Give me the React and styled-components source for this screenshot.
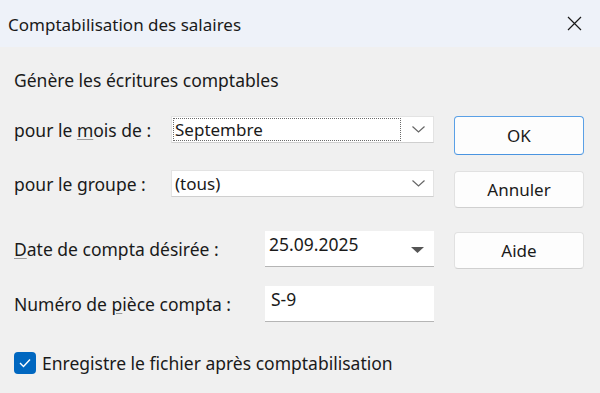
import React from 'react';
import styled, { createGlobalStyle } from 'styled-components';

const GlobalStyle = createGlobalStyle`
  html, body {
    margin: 0;
    padding: 0;
    background: #f0f0f0;
  }
  body {
    font-family: 'Noto Sans', 'Open Sans', sans-serif;
    color: #1a1a1a;
  }
`;

const Window = styled.div`
  width: 600px;
  height: 393px;
  background: #f0f0f0;
  overflow: hidden;
`;

const TitleBar = styled.div`
  height: 47px;
  background: #eef2f9;
  display: flex;
  align-items: center;
  justify-content: space-between;
  padding: 0 18px 0 8px;
  box-sizing: border-box;
`;

const Title = styled.div`
  font-size: 17px;
  color: #1a1a1a;
  margin-top: 1px;
`;

const CloseButton = styled.div`
  width: 16px;
  height: 16px;
  display: flex;
  align-items: center;
  justify-content: center;
`;

const Body = styled.div`
  padding: 20px 16px 0 14px;
`;

const Heading = styled.div`
  font-size: 17.5px;
  line-height: 26px;
`;

const Content = styled.div`
  display: flex;
  gap: 20px;
  margin-top: 23px;
`;

const FormCol = styled.div`
  width: 420px;
  display: flex;
  flex-direction: column;
`;

const Row = styled.div`
  display: flex;
  align-items: center;
  margin-top: ${p => p.$top || 0}px;
`;

const Label = styled.div`
  width: ${p => p.$w}px;
  flex-shrink: 0;
  font-size: 17.5px;
  white-space: nowrap;
`;

const Key = styled.span`
  text-decoration: underline;
  text-decoration-color: #9a9a9a;
  text-underline-offset: 2px;
`;

const Combo = styled.div`
  flex: 1;
  height: 27px;
  background: #fff;
  border: 1px solid #e3e3e3;
  border-bottom-color: #cfcfcf;
  box-sizing: border-box;
  display: flex;
  align-items: center;
  padding: 1px 0 1px 1px;
  font-size: 17px;
`;

const ComboText = styled.div`
  flex: 1;
  height: 100%;
  display: flex;
  align-items: center;
  padding-left: 1px;
  box-sizing: border-box;
  border: 1px dotted ${p => (p.$focus ? '#6b6b6b' : 'transparent')};
  margin-right: 3px;
`;

const Chevron = styled.div`
  width: 28px;
  display: flex;
  justify-content: center;
  padding-right: 1px;
`;

const Field = styled.div`
  flex: 1;
  height: 36px;
  background: #fff;
  border-bottom: 1px solid #b5b5b5;
  box-sizing: border-box;
  display: flex;
  align-items: flex-start;
  justify-content: space-between;
  padding: 1px 10px 0 ${p => p.$pl || 4}px;
  font-size: 17.5px;
`;

const DropArrow = styled.div`
  align-self: center;
  margin-top: 2px;
  display: flex;
`;

const ButtonCol = styled.div`
  width: 130px;
  display: flex;
  flex-direction: column;
`;

const Button = styled.div`
  height: ${p => p.$h || 37}px;
  margin-top: ${p => p.$top || 0}px;
  background: #fdfdfd;
  border: 1px solid ${p => (p.$default ? '#5aa0e6' : '#e1e1e1')};
  border-bottom-color: ${p => (p.$default ? '#4a94e0' : '#d0d0d0')};
  border-radius: 4px;
  box-sizing: border-box;
  display: flex;
  align-items: center;
  justify-content: center;
  font-size: 17px;
  color: #1a1a1a;
`;

const CheckRow = styled.div`
  display: flex;
  align-items: center;
  gap: 6px;
  margin-top: 29px;
  font-size: 17.5px;
`;

const CheckBox = styled.div`
  width: 22px;
  height: 22px;
  border-radius: 4px;
  background: #0067c0;
  display: flex;
  align-items: center;
  justify-content: center;
`;

const ChevronIcon = () => (
  <svg width="13" height="7" viewBox="0 0 13 7">
    <path d="M0.5 0.5 L6.5 6 L12.5 0.5" fill="none" stroke="#666" strokeWidth="1.2" />
  </svg>
);

const App = () => {
  return (
    <Window>
      <GlobalStyle />
      <TitleBar>
        <Title>Comptabilisation des salaires</Title>
        <CloseButton>
          <svg width="15" height="15" viewBox="0 0 15 15">
            <path d="M1 1 L14 14 M14 1 L1 14" stroke="#1a1a1a" strokeWidth="1.2" />
          </svg>
        </CloseButton>
      </TitleBar>
      <Body>
        <Heading>Génère les écritures comptables</Heading>
        <Content>
          <FormCol>
            <Row>
              <Label $w={157}>pour le <Key>m</Key>ois de :</Label>
              <Combo>
                <ComboText $focus>Septembre</ComboText>
                <Chevron><ChevronIcon /></Chevron>
              </Combo>
            </Row>
            <Row $top={27}>
              <Label $w={157}>pour le groupe :</Label>
              <Combo>
                <ComboText>(tous)</ComboText>
                <Chevron><ChevronIcon /></Chevron>
              </Combo>
            </Row>
            <Row $top={34}>
              <Label $w={251}><Key>D</Key>ate de compta désirée :</Label>
              <Field>
                <span>25.09.2025</span>
                <DropArrow>
                  <svg width="13" height="6" viewBox="0 0 13 6">
                    <path d="M0 0 L13 0 L6.5 6 Z" fill="#555" />
                  </svg>
                </DropArrow>
              </Field>
            </Row>
            <Row $top={19}>
              <Label $w={251}>Numéro de <Key>p</Key>ièce compta :</Label>
              <Field $pl={6}>
                <span>S-9</span>
              </Field>
            </Row>
          </FormCol>
          <ButtonCol>
            <Button $default $h={39}>OK</Button>
            <Button $top={16}>Annuler</Button>
            <Button $top={24}>Aide</Button>
          </ButtonCol>
        </Content>
        <CheckRow>
          <CheckBox>
            <svg width="12" height="10" viewBox="0 0 12 10">
              <path d="M1 5 L4.5 8.5 L11 1.5" fill="none" stroke="#fff" strokeWidth="1.4" />
            </svg>
          </CheckBox>
          Enregistre le fichier après comptabilisation
        </CheckRow>
      </Body>
    </Window>
  );
};

export default App;
